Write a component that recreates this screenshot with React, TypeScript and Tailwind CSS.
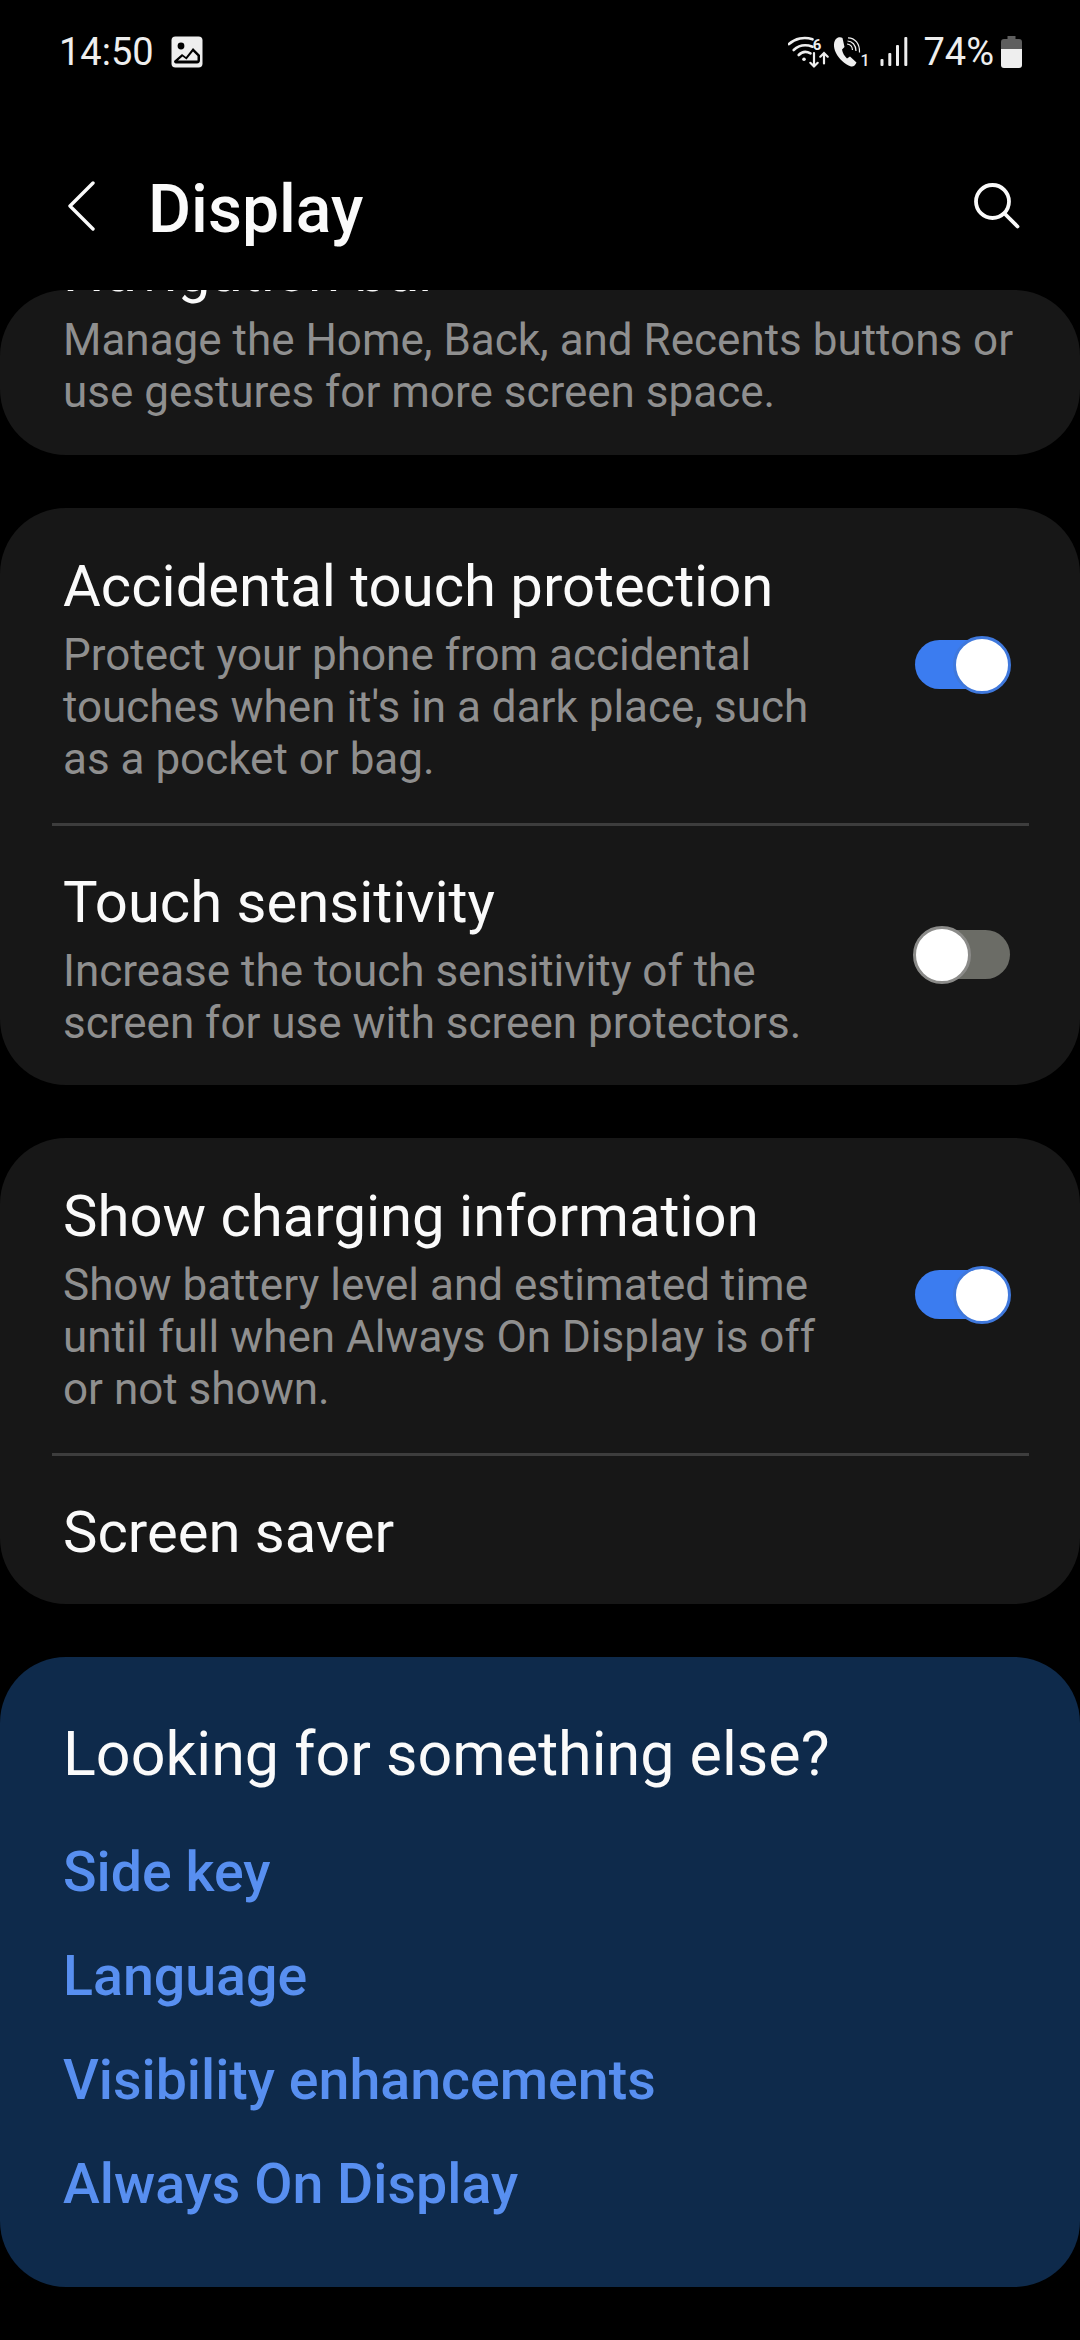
import React from 'react'

const Toggle = ({ on }: { on: boolean }) => (
  <div className={on ? 'relative w-[96px] h-[58px] -mt-[12px] shrink-0 flex items-center' : 'relative w-[98px] h-[58px] -mt-[12px] shrink-0 flex items-center'}>
    <div className={on ? 'w-[95px] h-[49px] rounded-full bg-[#3b7cf0]' : 'w-[93px] ml-[4px] h-[49px] rounded-full bg-[#6b6c66]'} />
    <div
      className={
        on
          ? 'absolute right-0 top-0 w-[58px] h-[58px] rounded-full bg-white border-[3px] border-[#3f78dc]'
          : 'absolute left-0 top-0 w-[58px] h-[58px] rounded-full bg-white border-[3px] border-[#8b8b89]'
      }
    />
  </div>
)

const Row = ({ title, lines, on }: { title: string; lines?: string[]; on?: boolean }) => (
  <div className="flex items-center justify-between pl-[63px] pr-[69px]">
    <div>
      <div className="text-[58px] leading-[60px] text-[#fafafa]">{title}</div>
      {lines && (
        <div className="mt-[13px] text-[44px] leading-[52px] text-[#8f8f8f]">
          {lines.map((l) => (
            <div key={l}>{l}</div>
          ))}
        </div>
      )}
    </div>
    {on !== undefined && <Toggle on={on} />}
  </div>
)

const Divider = () => <div className="ml-[52px] mr-[51px] mt-[38px] mb-[46px] h-[3px] bg-[#3d3d3d]" />

const StatusBar = () => (
  <div className="h-[100px] pt-[4px] flex items-center justify-between pl-[59px] pr-[58px] text-[#eeeeee] text-[38px]">
    <div className="flex items-center gap-[17px]">
      <span>14:50</span>
      <svg width="32" height="32" viewBox="0 0 32 32">
        <rect x="0.5" y="0.5" width="31" height="31" rx="4" fill="#eeeeee" />
        <circle cx="10" cy="10" r="3.4" fill="#000" />
        <path d="M3 25 L11 18 L15 21 L22 12 L29 19 L29 24 C29 26 28 27.500 26 27.500 L6 27.500 C4 27.500 3 27 3 25 Z" fill="#000" />
        <path d="M7 24.500 L11.500 20.500 L15.500 23.500 L22 15.500 L26.500 20 L26.500 24.500 Z" fill="#eeeeee" />
      </svg>
    </div>
    <div className="flex items-center">
      {/* wifi with arrows */}
      <svg width="41" height="34" viewBox="0 0 41 34" fill="none" stroke="#eeeeee" strokeLinecap="round">
        <path d="M1 9 C7 3.500 16 1.500 24.500 4.300" strokeWidth="2.600" />
        <path d="M5.700 15 C10 11 17 9 24.500 11.700" strokeWidth="2.600" />
        <path d="M10.700 20 C13.500 17 18 16 22.500 18.300" strokeWidth="2.600" />
        <circle cx="16" cy="24.300" r="1.800" fill="#eeeeee" stroke="none" />
        <path d="M26 18 V31.500 M22.300 27.800 L26 31.500 L29.700 27.800" strokeWidth="2.200" />
        <path d="M36 28.500 V18 M32.300 21.700 L36 18 L39.700 21.700" strokeWidth="2.200" />
        <text x="29" y="15" textAnchor="middle" fontSize="15" fontWeight="700" fill="#eeeeee" stroke="none">6</text>
      </svg>
      {/* call with sim number */}
      <svg width="37" height="34" viewBox="0 0 37 34" fill="none" className="ml-[4px]">
        <path d="M3.500 3.500 C0.500 6 0 12 3 18 C6 24 11.500 29 18 31.500 C20.500 32 22.500 30 23.500 27.500 L17 21.500 L14 23.500 C11.500 21 9.500 18 9 14.500 L11.500 12 L9.500 3 C8 1.800 5 2 3.500 3.500 Z" fill="#eeeeee" />
        <path d="M14 9 C17 9 19.500 11.500 19.500 15" stroke="#eeeeee" strokeWidth="1.200" />
        <path d="M14.500 6 C19 6 23 10 23 16" stroke="#eeeeee" strokeWidth="1.200" />
        <path d="M15 2.800 C22 2.800 27 9 26.500 17.500" stroke="#eeeeee" strokeWidth="1.200" />
        <text x="32" y="31" textAnchor="middle" fontSize="16" fontWeight="500" fill="#eeeeee">1</text>
      </svg>
      {/* signal */}
      <svg width="28" height="30" viewBox="0 0 28 30" className="ml-[10px]" fill="#eeeeee">
        <rect x="0.500" y="22" width="3" height="7" rx="1" />
        <rect x="8.300" y="16" width="3" height="13" rx="1" />
        <rect x="16" y="8" width="3" height="21" rx="1" />
        <rect x="24.300" y="0" width="3" height="29" rx="1" />
      </svg>
      <span className="ml-[15px] text-[38px]">74%</span>
      {/* battery */}
      <svg width="21" height="32" viewBox="0 0 21 32" className="ml-[7px]">
        <path d="M6.500 0 H14.500 V3 H18 C20 3 21 4 21 6 V13 H0 V6 C0 4 1 3 3 3 H6.500 Z" fill="#5e5e5e" />
        <path d="M0 13 H21 V29 C21 31 20 32 18 32 H3 C1 32 0 31 0 29 Z" fill="#eeeeee" />
      </svg>
    </div>
  </div>
)

const Header = () => (
  <div className="h-[190px] pt-[75px] flex items-start justify-between">
    <div className="flex items-start">
      <svg width="28" height="50" viewBox="0 0 28 50" fill="none" stroke="#fafafa" strokeWidth="3.400" strokeLinecap="round" strokeLinejoin="round" className="ml-[67px] mt-[6px]">
        <path d="M26 2 L3 25 L26 48" />
      </svg>
      <div className="ml-[53px] text-[66px] leading-[70px] font-medium text-[#fafafa]">Display</div>
    </div>
    <svg width="48" height="48" viewBox="0 0 48 48" fill="none" stroke="#fafafa" strokeWidth="3.800" strokeLinecap="round" className="mr-[60px] mt-[6px]">
      <circle cx="20.500" cy="20.500" r="16.500" />
      <path d="M32.500 32.500 L45.500 45.500" />
    </svg>
  </div>
)

const LINKS = ['Side key', 'Language', 'Visibility enhancements', 'Always On Display']

export default function App() {
  return (
    <div className="w-[1080px] h-[2340px] bg-black overflow-hidden font-['Roboto',sans-serif]">
      <StatusBar />
      <Header />

      <div className="flex flex-col gap-[53px]">
        {/* scrolled card, title cut by the app bar */}
        <div className="h-[165px] rounded-[66px] bg-[#171717] overflow-hidden pl-[63px]">
          <div className="-mt-[49px] text-[58px] leading-[60px] text-[#fafafa]">Navigation bar</div>
          <div className="mt-[13px] text-[44px] leading-[52px] text-[#8f8f8f]">
            <div>Manage the Home, Back, and Recents buttons or</div>
            <div>use gestures for more screen space.</div>
          </div>
        </div>

        <div className="rounded-[66px] bg-[#171717] pt-[48px] pb-[36px]">
          <Row
            title="Accidental touch protection"
            lines={['Protect your phone from accidental', "touches when it's in a dark place, such", 'as a pocket or bag.']}
            on
          />
          <Divider />
          <Row
            title="Touch sensitivity"
            lines={['Increase the touch sensitivity of the', 'screen for use with screen protectors.']}
            on={false}
          />
        </div>

        <div className="rounded-[66px] bg-[#171717] pt-[48px] pb-[42px]">
          <Row
            title="Show charging information"
            lines={['Show battery level and estimated time', 'until full when Always On Display is off', 'or not shown.']}
            on
          />
          <Divider />
          <Row title="Screen saver" />
        </div>

        <div className="h-[630px] rounded-[66px] bg-[#0e2a4b] pl-[63px] pt-[62px]">
          <div className="text-[61px] leading-[70px] text-[#fafafa]">Looking for something else?</div>
          <div className="mt-[52px] flex flex-col gap-[40px]">
            {LINKS.map((l) => (
              <div key={l} className="text-[55.5px] leading-[64px] font-medium text-[#588ff0]">
                {l}
              </div>
            ))}
          </div>
        </div>
      </div>
    </div>
  )
}
